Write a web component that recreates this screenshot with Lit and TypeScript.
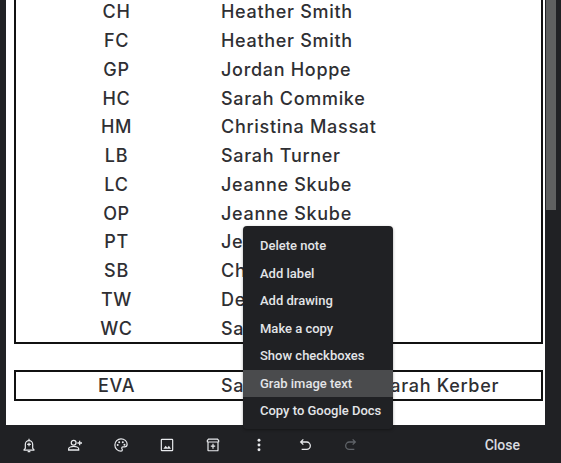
import { LitElement, html, css, svg } from "lit";
import { customElement } from "lit/decorators.js";

const rows: [string, string][] = [
  ["CH", "Heather Smith"],
  ["FC", "Heather Smith"],
  ["GP", "Jordan Hoppe"],
  ["HC", "Sarah Commike"],
  ["HM", "Christina Massat"],
  ["LB", "Sarah Turner"],
  ["LC", "Jeanne Skube"],
  ["OP", "Jeanne Skube"],
  ["PT", "Jeanne Skube"],
  ["SB", "Christina Massat"],
  ["TW", "Debra Jones"],
  ["WC", "Sarah Commike"],
];

const menu = ["Delete note", "Add label", "Add drawing", "Make a copy", "Show checkboxes", "Grab image text", "Copy to Google Docs"];

const icons = [
  svg`<path d="M12 2.500v2M6.500 17V11a5.500 5.500 0 0 1 11 0v6l1.800 1.700v1H4.700v-1L6.500 17zM10 21.800h4M12 8.500v5.500M9.200 11.200h5.600" fill="none" stroke="currentColor" stroke-width="1.800"/>`,
  svg`<circle cx="10" cy="8.500" r="3.600" fill="none" stroke="currentColor" stroke-width="1.900"/><path d="M2.500 19.500v-1.700c0-2.300 4.500-3.600 7.500-3.600s7.500 1.300 7.500 3.600v1.700H2.500zM19 5.500v7M15.500 9h7" fill="none" stroke="currentColor" stroke-width="1.900"/>`,
  svg`<path d="M12 2.800a9.200 9.200 0 1 0 0 18.400c1.300 0 2.100-.8 2.100-1.900 0-1.200-1-1.500-1-2.700 0-1 .8-1.700 1.800-1.700h2.300a4 4 0 0 0 4-4C21.200 6.300 17 2.800 12 2.800z" fill="none" stroke="currentColor" stroke-width="1.800"/><circle cx="7" cy="12" r="1.500" fill="currentColor"/><circle cx="9.300" cy="7.800" r="1.500" fill="currentColor"/><circle cx="14.700" cy="7.800" r="1.500" fill="currentColor"/><circle cx="17.200" cy="11.500" r="1.500" fill="currentColor"/>`,
  svg`<rect x="3.500" y="3.500" width="17" height="17" rx="1" fill="none" stroke="currentColor" stroke-width="1.800"/><path d="M6.500 17.500l3.500-4.500 2.500 3 2.300-2.800 3.200 4.300H6.500z" fill="currentColor"/>`,
  svg`<path d="M3.500 8V5.300L5.300 3.200h13.400L20.500 5.300V8M4.500 7.500v12.200a.9.900 0 0 0 .9.900h13.200a.9.900 0 0 0 .9-.9V7.500zM3.500 7.500h17M12 10v7.500M8.700 13.700h6.600" fill="none" stroke="currentColor" stroke-width="1.800"/>`,
  svg`<circle cx="12" cy="5" r="2.200" fill="currentColor"/><circle cx="12" cy="12" r="2.200" fill="currentColor"/><circle cx="12" cy="19" r="2.200" fill="currentColor"/>`,
];
const undo = svg`<path d="M9.500 3.500L5.500 7.500l4 4M6 7.500h8.500a5.500 5.500 0 0 1 0 11H7" fill="none" stroke="currentColor" stroke-width="1.900"/>`;
const redo = svg`<path d="M14.500 3.500l4 4-4 4M18 7.500H9.500a5.500 5.500 0 0 0 0 11H17" fill="none" stroke="currentColor" stroke-width="1.900"/>`;

@customElement("app-root")
export class AppRoot extends LitElement {
  static styles = css`
    :host {
      display: flex;
      height: 463px;
      width: 561px;
      overflow: hidden;
      position: relative;
      background: #202124;
      font-family: "Inter", "Liberation Sans", sans-serif;
    }
    .main {
      flex: none;
      width: 546px;
      padding: 0 1px 0 6px;
      box-sizing: border-box;
      display: flex;
      flex-direction: column;
    }
    .note {
      flex: 1;
      min-height: 0;
      background: #fff;
      overflow: hidden;
      display: flex;
      flex-direction: column;
      justify-content: flex-end;
      padding: 0 2px 24px 8px;
      color: #2f2f33;
      font-size: 18px;
      font-weight: 500;
      letter-spacing: 0.7px;
    }
    .table {
      flex: none;
      border: 2px solid #111;
      margin-bottom: 26px;
    }
    .row {
      display: grid;
      grid-template-columns: 205px 1fr;
      height: 28.750px;
      box-sizing: border-box;
      padding-top: 1px;
      align-items: center;
    }
    .single {
      flex: none;
      border: 2px solid #111;
      height: 27px;
      display: grid;
      grid-template-columns: 205px 157px 1fr;
      align-items: center;
    }
    .code {
      text-align: center;
      padding-right: 4px;
    }
    .toolbar {
      flex: none;
      height: 38px;
      box-sizing: border-box;
      padding-top: 2px;
      display: flex;
      align-items: center;
      color: #e8eaed;
    }
    .icon {
      flex: none;
      width: 46px;
      display: flex;
      justify-content: center;
    }
    .icon svg {
      width: 16px;
      height: 16px;
    }
    .dim {
      color: #5f6368;
    }
    .close {
      margin-left: auto;
      margin-right: 25px;
      font: 500 14px "Roboto", sans-serif;
      color: #dadce0;
    }
    .scroll {
      flex: none;
      width: 10px;
      height: 210px;
      background: #5f6060;
    }
    .menu {
      position: absolute;
      left: 243px;
      top: 226px;
      width: 150px;
      height: 203px;
      box-sizing: border-box;
      padding: 6px 0;
      background: #202124;
      border-radius: 4px;
      box-shadow: 0 1px 3px rgba(0, 0, 0, 0.35);
      font: 500 13px "Roboto", sans-serif;
      color: #e3e5e8;
    }
    .item {
      height: 27.500px;
      display: flex;
      align-items: center;
      padding-left: 17px;
      white-space: nowrap;
    }
    .active {
      background: #4a4b4d;
    }
  `;

  render() {
    return html`
      <div class="main">
        <div class="note">
          <div class="table">
            ${rows.map(
              ([a, b]) => html`<div class="row"><span class="code">${a}</span><span>${b}</span></div>`
            )}
          </div>
          <div class="single">
            <span class="code">EVA</span><span>Sarah Turner</span><span>Sarah Kerber</span>
          </div>
        </div>
        <div class="toolbar">
          ${icons.map((p) => html`<span class="icon"><svg viewBox="0 0 24 24">${p}</svg></span>`)}
          <span class="icon"><svg viewBox="0 0 24 24">${undo}</svg></span>
          <span class="icon dim"><svg viewBox="0 0 24 24">${redo}</svg></span>
          <span class="close">Close</span>
        </div>
      </div>
      <div class="scroll"></div>
      <div class="menu">
        ${menu.map((m, i) => html`<div class="item ${i === 5 ? "active" : ""}">${m}</div>`)}
      </div>
    `;
  }
}
